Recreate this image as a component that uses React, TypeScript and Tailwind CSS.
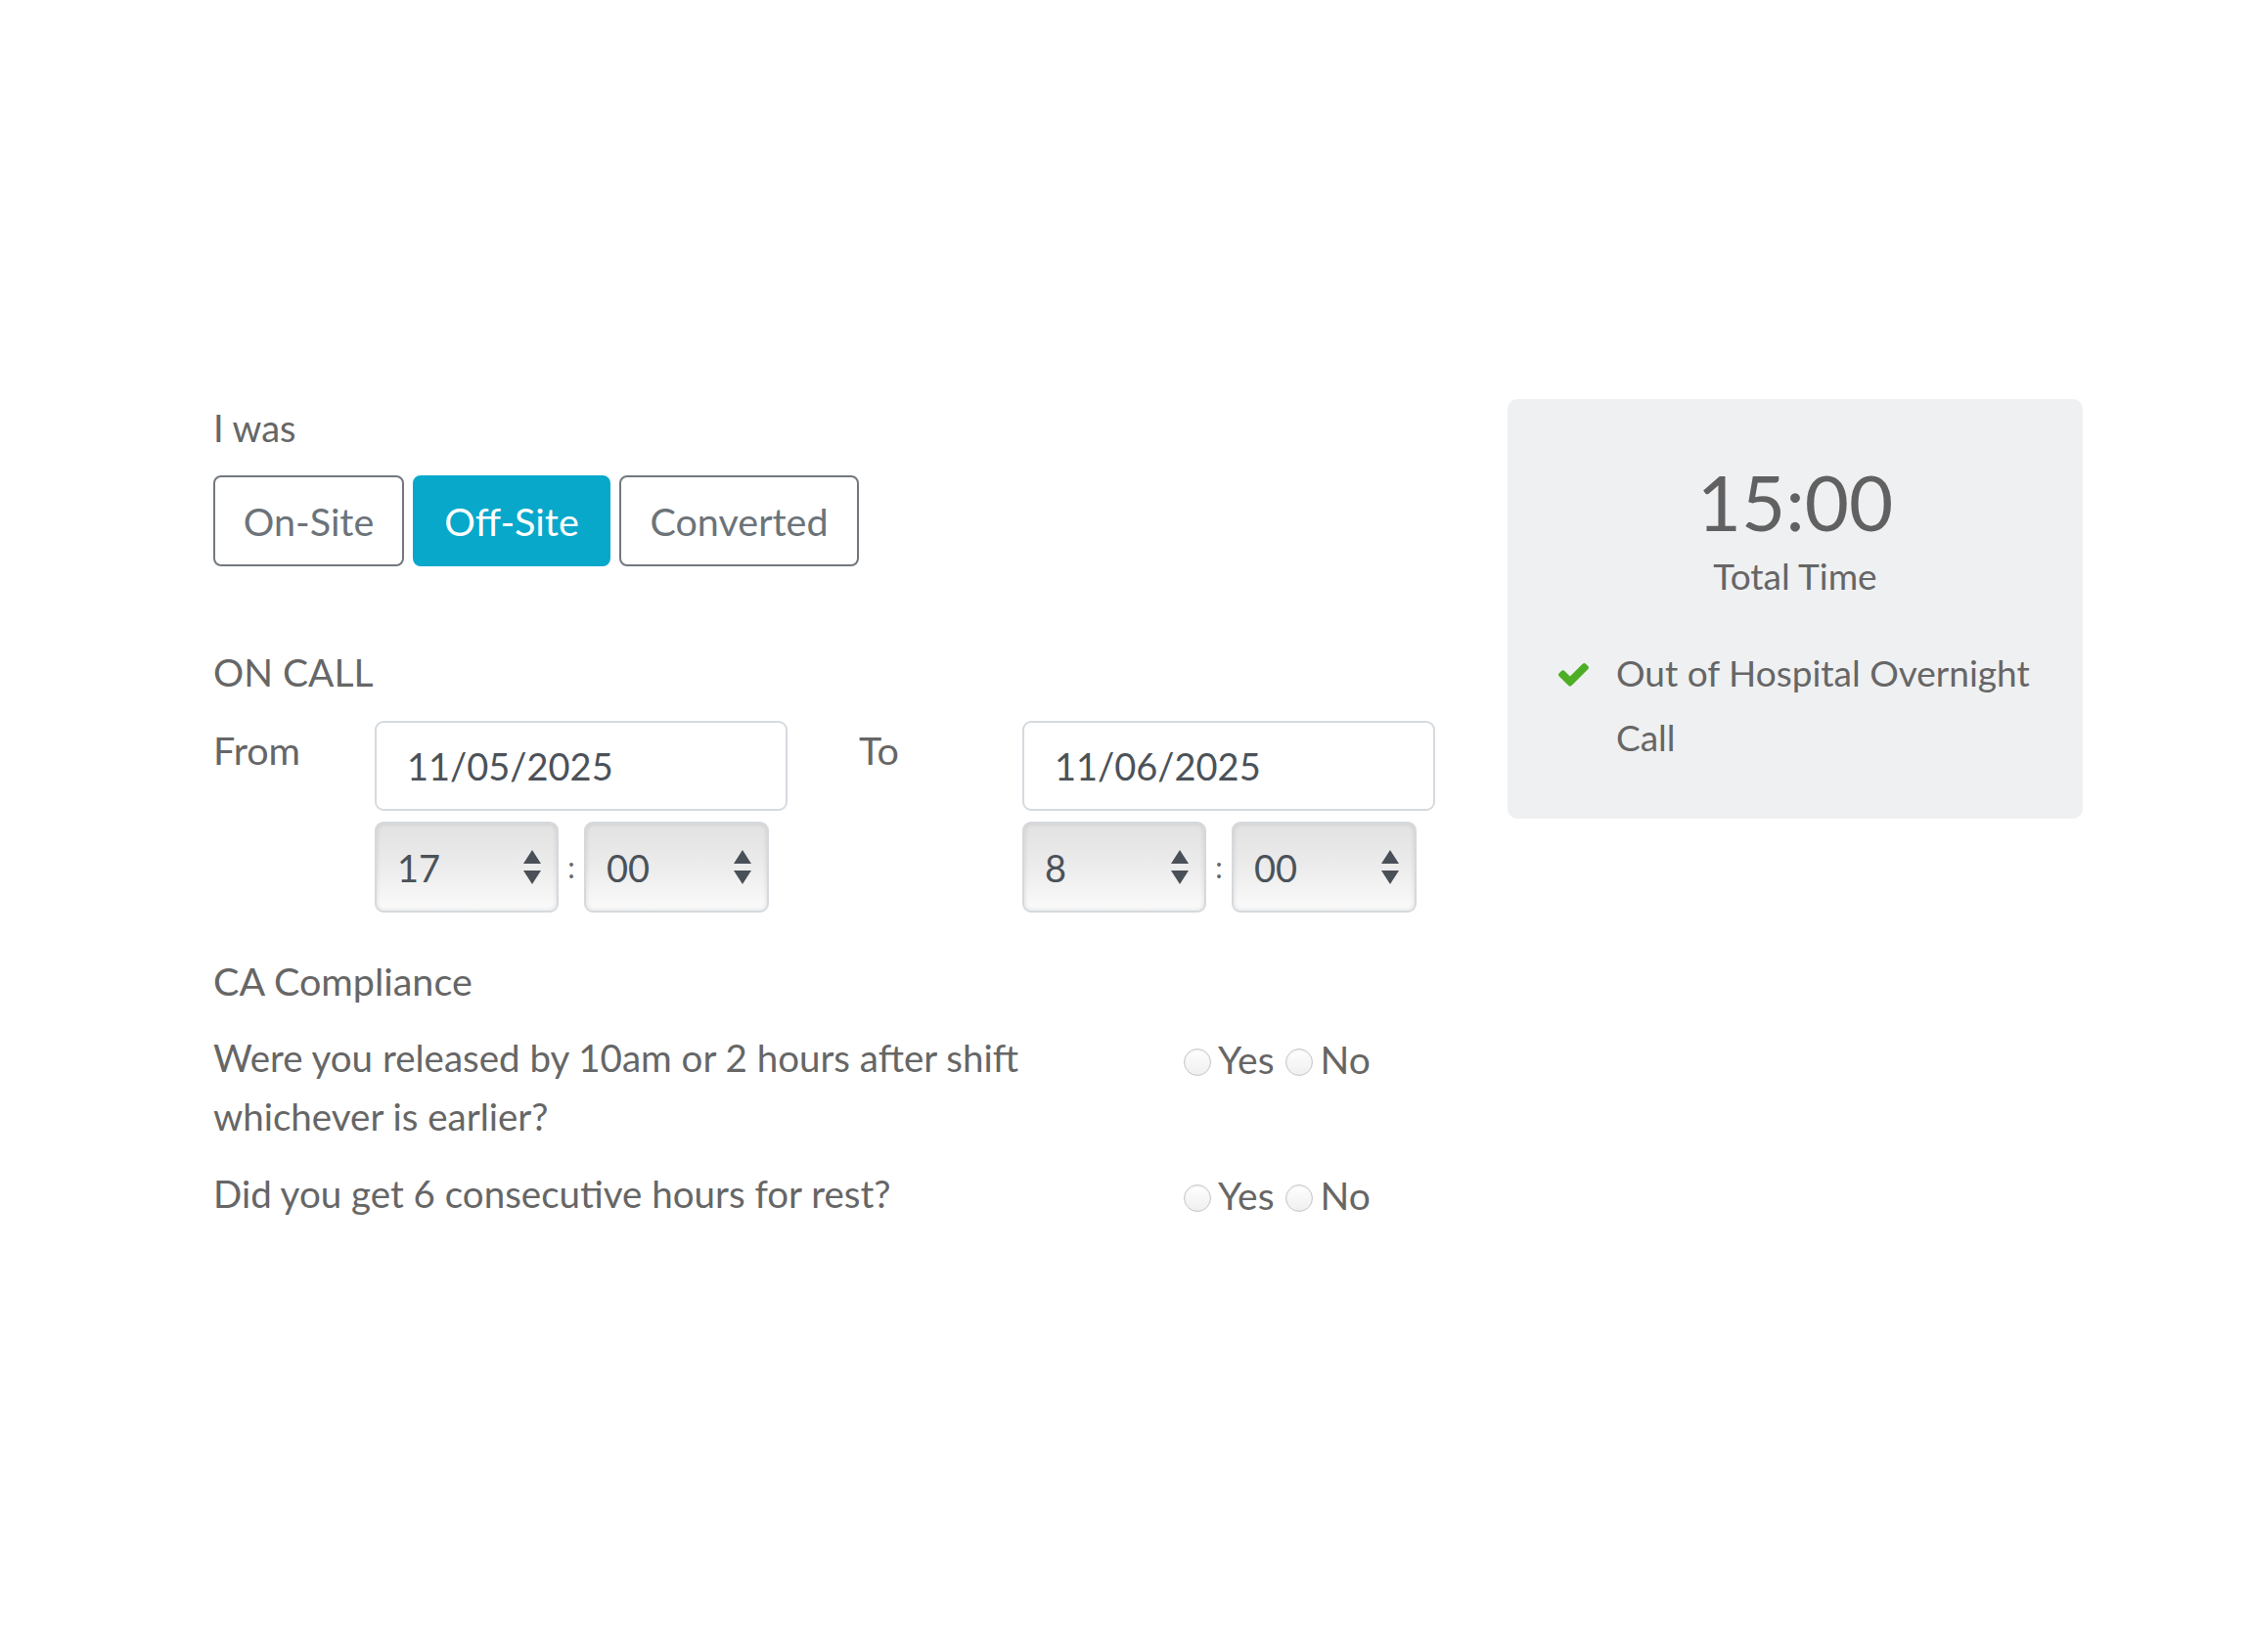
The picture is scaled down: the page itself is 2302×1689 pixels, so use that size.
import React from "react";

function SelectArrows() {
    return (
        <svg className="w-[18px] h-[35px]" viewBox="0 0 18 35" fill="#4a5058">
            <path d="M9 0 L18 14 H0 Z" />
            <path d="M0 21 H18 L9 35 Z" />
        </svg>
    );
}

function TimeSelect({ value, width }: { value: string; width: string }) {
    return (
        <div
            className={`${width} h-[93px] flex items-center justify-between pl-[21px] pr-[16px] rounded-[9px] border-2 border-[#d5d9dd] bg-linear-to-b from-[#e2e2e2] via-[#ececec] to-[#fbfbfb] shadow-[inset_0_0_5px_rgba(0,0,0,0.12)] text-[38px] leading-[48px] text-[#4b5259]`}
        >
            <span>{value}</span>
            <SelectArrows />
        </div>
    );
}

function DateTime({ date, hour, minute }: { date: string; hour: string; minute: string }) {
    return (
        <div className="w-[422px]">
            <div className="h-[92px] flex items-center pl-[31px] rounded-[9px] border-2 border-[#d5dadf] bg-white text-[38px] leading-[48px] text-[#4b5259]">
                {date}
            </div>
            <div className="mt-[11px] flex items-center">
                <TimeSelect value={hour} width="w-[188px]" />
                <span className="w-[26px] text-center text-[30px] text-[#666]">:</span>
                <TimeSelect value={minute} width="w-[189px]" />
            </div>
        </div>
    );
}

function Radio() {
    return (
        <span className="inline-block mt-[6px] w-[28px] h-[28px] rounded-full border-[1.5px] border-[#c6c6c6] bg-linear-to-b from-white to-[#efefef] shadow-[inset_0_1px_2px_rgba(0,0,0,0.07)]" />
    );
}

function YesNo() {
    return (
        <div className="h-[60px] flex items-center ml-[52px] text-[39px]">
            <div className="flex items-center mt-[3px]">
                <Radio />
                <span className="ml-[7px] leading-[44px] text-[#666]">Yes</span>
                <span className="ml-[11px] flex"><Radio /></span>
                <span className="ml-[8px] leading-[44px] text-[#666]">No</span>
            </div>
        </div>
    );
}

export default function App() {
    return (
        <div className="min-h-screen bg-white font-[Lato,sans-serif] text-[#666]">
            <div className="flex pt-[408px] pl-[218px]">
                <div className="w-[1323px] pt-[8px]">
                    <div className="text-[38px] leading-[43px]">I was</div>
                    <div className="mt-[27px] flex gap-[9px] text-[39.5px]">
                        <button className="w-[195px] h-[93px] rounded-[8px] border-2 border-[#72787e] bg-white text-[#6c7379]">
                            On-Site
                        </button>
                        <button className="w-[202px] h-[93px] rounded-[8px] border-2 border-[#08a8cb] bg-[#08a8cb] text-white">
                            Off-Site
                        </button>
                        <button className="w-[245px] h-[93px] rounded-[8px] border-2 border-[#72787e] bg-white text-[#6c7379]">
                            Converted
                        </button>
                    </div>

                    <div className="mt-[87px] text-[39px] leading-[43px]">ON CALL</div>
                    <div className="mt-[28px] flex">
                        <div className="w-[660px] flex">
                            <div className="w-[165px] pt-[8px] text-[39.5px] leading-[43px]">From</div>
                            <DateTime date="11/05/2025" hour="17" minute="00" />
                        </div>
                        <div className="flex">
                            <div className="w-[167px] pt-[8px] text-[39.5px] leading-[43px]">To</div>
                            <DateTime date="11/06/2025" hour="8" minute="00" />
                        </div>
                    </div>

                    <div className="mt-[48px] text-[39.5px] leading-[43px]">CA Compliance</div>
                    <div className="mt-[27px] flex text-[38.5px] leading-[60px]">
                        <div className="w-[940px]">
                            Were you released by 10am or 2 hours after shift whichever is earlier?
                        </div>
                        <YesNo />
                    </div>
                    <div className="mt-[19px] flex text-[38.5px] leading-[60px]">
                        <div className="w-[940px]">Did you get 6 consecutive hours for rest?</div>
                        <YesNo />
                    </div>
                </div>

                <aside className="w-[588px] h-[429px] rounded-[10px] bg-[#eff0f2] pt-[56px] flex flex-col items-center">
                    <div className="text-[78px] leading-[98px] text-[#616161]">15:00</div>
                    <div className="mt-[6px] text-[37px] leading-[42px] text-[#666]">Total Time</div>
                    <div className="mt-[45px] self-stretch flex pl-[52px]">
                        <svg className="mt-[22px] w-[31px] h-[25px] shrink-0" viewBox="121 302 1550 1224" fill="#4cae25">
                            <path d="M1671 566q0 40-28 68l-724 724-136 136q-28 28-68 28t-68-28l-136-136-362-362q-28-28-28-68t28-68l136-136q28-28 68-28t68 28l294 295 656-657q28-28 68-28t68 28l136 136q28 28 28 68z" />
                        </svg>
                        <div className="ml-[28px] w-[437px] text-[37px] leading-[66px] text-[#666]">
                            Out of Hospital Overnight Call
                        </div>
                    </div>
                </aside>
            </div>
        </div>
    );
}
